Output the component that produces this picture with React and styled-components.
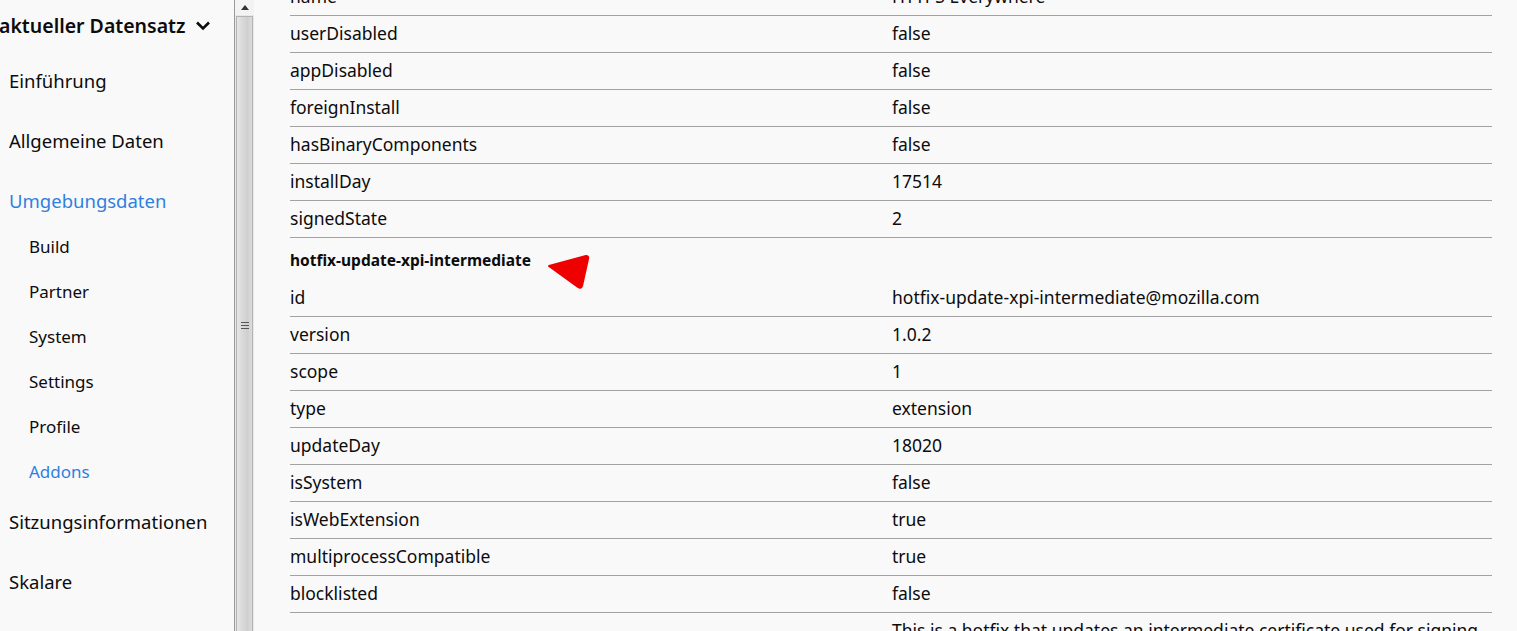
import React from "react";
import styled, { createGlobalStyle } from "styled-components";

const Global = createGlobalStyle`
  html, body {
    margin: 0;
    padding: 0;
    background: #f9f9fa;
    overflow: hidden;
  }
  body {
    font-family: "Noto Sans", "Open Sans", sans-serif;
    color: #0c0c0d;
  }
`;

const Page = styled.div`
  display: flex;
  width: 1517px;
  height: 631px;
  overflow: hidden;
  background: #f9f9fa;
`;

const Sidebar = styled.nav`
  width: 234px;
  flex-shrink: 0;
  display: flex;
  flex-direction: column;
  overflow: hidden;
`;

const Heading = styled.div`
  display: flex;
  align-items: center;
  gap: 10px;
  height: 50px;
  margin-left: -1px;
  font-size: 19.5px;
  font-weight: 600;
  white-space: nowrap;
`;

const NavItem = styled.div`
  height: ${(p) => (p.$sub ? 45 : 60)}px;
  display: flex;
  align-items: center;
  padding-left: ${(p) => (p.$sub ? 29 : 9)}px;
  font-size: ${(p) => (p.$sub ? 17 : 18.5)}px;
  color: ${(p) => (p.$active ? "#2e80e0" : "#0c0c0d")};
  white-space: nowrap;
`;

const SubList = styled.div`
  display: flex;
  flex-direction: column;
  margin: -6px 0 -3px;
`;

const Scrollbar = styled.div`
  width: 19px;
  flex-shrink: 0;
  display: flex;
  flex-direction: column;
  border-left: 1px solid #9a9a9a;
  background: #e8e8e8;
`;

const ScrollButton = styled.div`
  height: 15px;
  display: flex;
  align-items: center;
  justify-content: center;
  background: #f3f3f3;
`;

const Thumb = styled.div`
  flex: 1;
  margin: 1px 1px 0 1px;
  border: 1px solid #b4b4b4;
  border-bottom: none;
  background: linear-gradient(90deg, #e6e6e6 0%, #d8d8d8 40%, #cfcfcf 70%, #dcdcdc 100%);
  display: flex;
  align-items: center;
  justify-content: center;
`;

const Grip = styled.div`
  width: 8px;
  display: flex;
  flex-direction: column;
  gap: 2px;
  margin-top: 2px;
  span {
    height: 1px;
    background: #555;
  }
`;

const Main = styled.main`
  flex: 1;
  overflow: hidden;
  padding: 0 25px 0 36px;
  position: relative;
`;

const Table = styled.div`
  margin-top: -21px;
  display: flex;
  flex-direction: column;
`;

const Row = styled.div`
  display: grid;
  grid-template-columns: 602px 1fr;
  padding: 5px 0 7px;
  border-bottom: 1px solid #a2a2a2;
  font-size: 17.5px;
  line-height: 24px;
`;

const Cell = styled.div`
  white-space: nowrap;
`;

const SectionTitle = styled.div`
  height: 42px;
  box-sizing: border-box;
  padding-top: 2px;
  display: flex;
  align-items: center;
  font-size: 15.5px;
  font-weight: 700;
`;

const Marker = styled.svg`
  position: absolute;
  left: 292px;
  top: 253px;
`;

const before = [
  ["name", "HTTPS Everywhere"],
  ["userDisabled", "false"],
  ["appDisabled", "false"],
  ["foreignInstall", "false"],
  ["hasBinaryComponents", "false"],
  ["installDay", "17514"],
  ["signedState", "2"],
];

const after = [
  ["id", "hotfix-update-xpi-intermediate@mozilla.com"],
  ["version", "1.0.2"],
  ["scope", "1"],
  ["type", "extension"],
  ["updateDay", "18020"],
  ["isSystem", "false"],
  ["isWebExtension", "true"],
  ["multiprocessCompatible", "true"],
  ["blocklisted", "false"],
  ["", "This is a hotfix that updates an intermediate certificate used for signing"],
];

const nav = [
  { label: "Einführung" },
  { label: "Allgemeine Daten" },
  {
    label: "Umgebungsdaten",
    active: true,
    children: [
      { label: "Build" },
      { label: "Partner" },
      { label: "System" },
      { label: "Settings" },
      { label: "Profile" },
      { label: "Addons", active: true },
    ],
  },
  { label: "Sitzungsinformationen" },
  { label: "Skalare" },
];

export default function App() {
  return (
    <>
      <Global />
      <Page>
        <Sidebar>
          <Heading>
            aktueller Datensatz
            <svg width="16" height="11" viewBox="0 0 16 11">
              <path d="M2 2.5 L8 8.5 L14 2.5" fill="none" stroke="#0c0c0d" strokeWidth="2.6" />
            </svg>
          </Heading>
          {nav.map((n) => (
            <React.Fragment key={n.label}>
              <NavItem $active={n.active}>{n.label}</NavItem>
              {n.children && (
                <SubList>
                  {n.children.map((c) => (
                    <NavItem key={c.label} $sub $active={c.active}>
                      {c.label}
                    </NavItem>
                  ))}
                </SubList>
              )}
            </React.Fragment>
          ))}
        </Sidebar>
        <Scrollbar>
          <ScrollButton>
            <svg width="8" height="5" viewBox="0 0 8 5">
              <path d="M0 5 L4 0 L8 5 Z" fill="#333" />
            </svg>
          </ScrollButton>
          <Thumb>
            <Grip>
              <span />
              <span />
              <span />
            </Grip>
          </Thumb>
        </Scrollbar>
        <Main>
          <Table>
            {before.map(([k, v]) => (
              <Row key={k}>
                <Cell>{k}</Cell>
                <Cell>{v}</Cell>
              </Row>
            ))}
            <SectionTitle>hotfix-update-xpi-intermediate</SectionTitle>
            {after.map(([k, v]) => (
              <Row key={k || "description"}>
                <Cell>{k}</Cell>
                <Cell>{v}</Cell>
              </Row>
            ))}
          </Table>
          <Marker width="50" height="42" viewBox="0 0 50 42">
            <path d="M3 13 L40 3 Q43 3 42 6 L36 33 Q35 36 32 34 Z" fill="#ee0000" stroke="#ee0000" strokeWidth="2" strokeLinejoin="round" />
          </Marker>
        </Main>
      </Page>
    </>
  );
}
